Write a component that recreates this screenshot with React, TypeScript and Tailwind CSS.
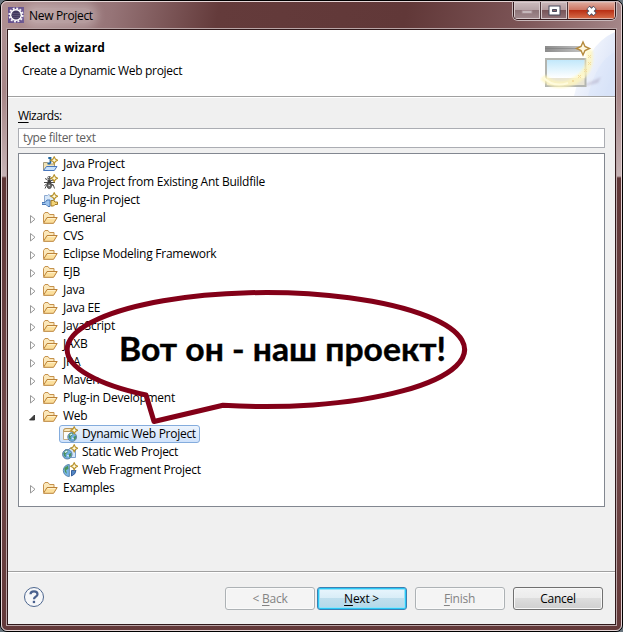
import React from "react";

const Sparkle = ({ x, y }: { x: number; y: number }) => (
  <g transform={`translate(${x} ${y})`}>
    <path d="M0-3.500 1.200-1.200 3.500 0 1.200 1.200 0 3.500-1.200 1.200-3.500 0-1.200-1.200Z" fill="#fffbe0" stroke="#b8912a" strokeWidth="1.100" />
  </g>
);

const Folder = () => (
  <svg width="16" height="16" viewBox="0 0 16 16" className="shrink-0">
    <path d="M1.500 12.500v-8L3 2.500h3l1.500 2h4.500v3" fill="#fbe8bb" stroke="#c6924c" />
    <path d="M1.500 13.300 5 7.500h10.200L11.600 13.300Z" fill="#fcdf9c" stroke="#bb8238" />
    <path d="M5.700 8.600h7.600" stroke="#fff3d2" />
  </svg>
);

const JavaIcon = () => (
  <svg width="16" height="16" viewBox="0 0 16 16" className="shrink-0">
    <path d="M1.500 14V6.500h4l1 1.500h6v2" fill="#f2e3b6" stroke="#a49a7b" />
    <path d="M1.500 14.500 4.500 10.500h10.500L12.300 14.500Z" fill="#c9e2fc" stroke="#4977bd" />
    <path d="M6.300 2h2.200v4q0 2-3 1.300" fill="none" stroke="#23679f" strokeWidth="1.800" />
    <Sparkle x={12.2} y={4.2} />
  </svg>
);

const AntIcon = () => (
  <svg width="16" height="16" viewBox="0 0 16 16" className="shrink-0">
    <path d="M3 4.500 5 5.500l2 2 4-1.500M2 8.500h11M3 14.500l1.500-3 3-1.500 4 1.500 1 3M2.500 11.500 7 8.500l5 3" fill="none" stroke="#4a4a4a" />
    <ellipse cx="7.300" cy="4" rx="2" ry="1.900" fill="#5d5d5d" />
    <ellipse cx="7.300" cy="7.500" rx="1.700" ry="1.700" fill="#3d3d3d" />
    <ellipse cx="7.300" cy="11.800" rx="2.200" ry="2.800" fill="#707070" stroke="#333" strokeWidth=".7" />
    <path d="M6 3.500h1M8 3.500h1M6.500 11.500h1.500" stroke="#ddd" />
    <Sparkle x={12.2} y={4.2} />
  </svg>
);

const PluginIcon = () => (
  <svg width="16" height="16" viewBox="0 0 16 16" className="shrink-0">
    <path d="M2.500 11V3.500h3q1-2 2.500 0h4V11" fill="#d6e7f9" stroke="#8eaad0" />
    <path d="M0 10.500h3l2-2.500h3v6.500H6L4 12.500H0Z" fill="#9cc4ee" stroke="#4c79b5" />
    <path d="M9 8.500h2.500L13 10h2.500v2.500H13L11.500 14H9Z" fill="#f3d477" stroke="#a37b25" />
    <Sparkle x={12.2} y={4.2} />
  </svg>
);

const Globe = ({ x, y, r }: { x: number; y: number; r: number }) => (
  <g transform={`translate(${x} ${y}) scale(${r / 5})`}>
    <circle r="4.800" fill="#6faee2" stroke="#5c7f9f" />
    <path d="M-4-1-2-4 1-4 0-1.500-2 0-1 3-3 2ZM1.500 0 4-1.500 4 1.500 2 3.500Z" fill="#48905b" />
    <path d="M-2.500-2 0-3.300M0 1l1.500 1" stroke="#e4f4ff" strokeWidth="1.300" />
  </g>
);

const DynamicIcon = () => (
  <svg width="16" height="16" viewBox="0 0 16 16" className="shrink-0">
    <path d="M1.500 13.500V5Q1.500 2.500 4 2.500h7v11Z" fill="#fdfdfa" stroke="#c2ad89" />
    <path d="M1.500 5.500V5Q1.500 2.500 4 2.500h7v3Z" fill="#f9e6ba" stroke="#b9975c" />
    <Globe x={10.2} y={11} r={4.6} />
    <Sparkle x={12.2} y={4.2} />
  </svg>
);

const StaticIcon = () => (
  <svg width="16" height="16" viewBox="0 0 16 16" className="shrink-0">
    <path d="M3.500 13.500v-8H7l1-1.500h5.500v9.500Z" fill="#d5e7fb" stroke="#7ba0cd" />
    <Globe x={5.3} y={10.3} r={4.9} />
    <Sparkle x={12.2} y={4.2} />
  </svg>
);

const FragmentIcon = () => (
  <svg width="16" height="16" viewBox="0 0 16 16" className="shrink-0">
    <path d="M7.300 2.500A6 6 0 0 0 7.300 14.500Z" fill="#78b6e8" stroke="#5c86ad" />
    <path d="M2.300 6 6 3.500 6.500 7 4 8 5 12 3 10Z" fill="#4a9558" />
    <path d="M9.500 8.500h4.500q-.5 4-4.500 5.500Z" fill="#5488c6" stroke="#365f9b" />
    <Sparkle x={12.2} y={4.2} />
  </svg>
);

const Arrow = ({ state }: { state?: "open" | "closed" }) => (
  <svg width="10" height="10" viewBox="0 0 10 10" className="mt-[2px] shrink-0">
    {state === "closed" && <path d="M3.500 1.500v7.500L8 5.250Z" fill="#fff" stroke="#989898" />}
    {state === "open" && <path d="M7.500 3v5h-5Z" fill="#404040" stroke="#262626" strokeWidth=".8" />}
  </svg>
);

type Row = { label: string; icon?: React.ReactNode; arrow?: "open" | "closed"; child?: boolean; selected?: boolean };

const rows: Row[] = [
  { label: "Java Project", icon: <JavaIcon /> },
  { label: "Java Project from Existing Ant Buildfile", icon: <AntIcon /> },
  { label: "Plug-in Project", icon: <PluginIcon /> },
  { label: "General", arrow: "closed" },
  { label: "CVS", arrow: "closed" },
  { label: "Eclipse Modeling Framework", arrow: "closed" },
  { label: "EJB", arrow: "closed" },
  { label: "Java", arrow: "closed" },
  { label: "Java EE", arrow: "closed" },
  { label: "JavaScript", arrow: "closed" },
  { label: "JAXB", arrow: "closed" },
  { label: "JPA", arrow: "closed" },
  { label: "Maven", arrow: "closed" },
  { label: "Plug-in Development", arrow: "closed" },
  { label: "Web", arrow: "open" },
  { label: "Dynamic Web Project", icon: <DynamicIcon />, child: true, selected: true },
  { label: "Static Web Project", icon: <StaticIcon />, child: true },
  { label: "Web Fragment Project", icon: <FragmentIcon />, child: true },
  { label: "Examples", arrow: "closed" },
];

const TreeRow = ({ row }: { row: Row }) =>
  row.child ? (
    <div className="flex h-[18px] pl-[40px]">
      <div
        className={
          row.selected
            ? "flex h-[18px] items-center gap-[4px] rounded-[3px] border border-[#84acdd] bg-linear-to-b from-[#edf4fd] to-[#cfe2fb] pr-[3px] pl-[2px]"
            : "flex h-[18px] items-center gap-[4px] border border-transparent pl-[2px]"
        }
      >
        {row.icon}
        <span className="leading-[16px] tracking-[-0.28px] whitespace-nowrap">{row.label}</span>
      </div>
    </div>
  ) : (
    <div className="flex h-[18px] items-center pl-[8px]">
      <Arrow state={row.arrow} />
      <span className="ml-[5px] flex">{row.icon ?? <Folder />}</span>
      <span className="ml-[5px] leading-[18px] whitespace-nowrap">{row.label}</span>
    </div>
  );

const EclipseIcon = () => (
  <svg width="16" height="16" viewBox="0 0 16 16" className="shrink-0">
    <rect width="16" height="16" fill="#67518d" />
    <circle cx="8" cy="8" r="6.600" fill="none" stroke="#f4f2f5" strokeWidth="2" strokeDasharray="1.900 1.556" />
    <circle cx="8" cy="8" r="5.300" fill="#40395e" stroke="#fff" strokeWidth="1.500" />
    <path d="M4 6.500h8M3.500 8.500h9M4 10.500h8" stroke="#5f5879" strokeWidth=".8" />
  </svg>
);

const TitleBar = () => (
  <div className="flex h-[28px] justify-between">
    <div className="mt-[5px] flex h-[16px] items-center">
      <span className="ml-[6px] flex"><EclipseIcon /></span>
      <span className="ml-[5px] rounded-full bg-white/25 leading-[15px] tracking-[-0.32px] shadow-[0_0_8px_5px_rgba(255,255,255,0.25)]">New Project</span>
    </div>
    <div className="mr-[5px] flex h-[18px] overflow-hidden rounded-b-[5px] border border-t-0 border-[#33191d] shadow-[0_0_0_1px_#c9b9bb]">
      <div className="flex w-[27px] items-center justify-center border-r border-[#4b3539] bg-[linear-gradient(#cbbcbe,#b5a3a6_48%,#8d7478_50%,#a18a8e)] pt-[3px] shadow-[inset_0_0_0_1px_#d6c9cb]">
        <svg width="12" height="6" viewBox="0 0 12 6"><path d="M1 1.500h10v3H1Z" fill="#c4b7ba" stroke="#a2898f" /></svg>
      </div>
      <div className="flex w-[27px] items-center justify-center border-r border-[#4b3539] bg-[linear-gradient(#cbb8ba,#b39a9d_48%,#785559_50%,#92757a)] shadow-[inset_0_0_0_1px_#d6c9cb]">
        <svg width="13" height="12" viewBox="0 0 13 12"><path d="M3 3h7v5H3Z" fill="none" stroke="#484a5d" strokeWidth="5" /><path d="M3 3h7v5H3Z" fill="none" stroke="#fff" strokeWidth="3" /><path d="M4.500 4.500h4v2h-4Z" fill="#8a6368" stroke="#484a5d" /></svg>
      </div>
      <div className="flex w-[47px] items-center justify-center bg-[linear-gradient(#deac9f,#cd735f_48%,#ba3015_50%,#d8704d)] shadow-[inset_0_0_0_1px_#e1b5aa]">
        <svg width="13" height="12" viewBox="0 0 13 12"><path d="m3 2.500 7 7m0-7-7 7" stroke="#4c4c5e" strokeWidth="4.800" /><path d="m3.400 2.900 6.200 6.200m0-6.200-6.200 6.200" stroke="#fff" strokeWidth="2.900" /></svg>
      </div>
    </div>
  </div>
);

const WizardBanner = () => (
  <svg width="75" height="66" viewBox="0 0 75 66" className="shrink-0">
    <defs>
      <linearGradient id="sky" x2="1" y2="0.600"><stop stopColor="#fff" /><stop offset="1" stopColor="#dbe4f8" /></linearGradient>
      <linearGradient id="pane" x2="0" y2="1"><stop stopColor="#c2e8fb" /><stop offset="1" stopColor="#fff" /></linearGradient>
      <linearGradient id="bar" x2="1"><stop stopColor="#8c8c8c" /><stop offset="1" stopColor="#c6c6c6" /></linearGradient>
      <filter id="soft"><feGaussianBlur stdDeviation="1.300" /></filter>
    </defs>
    <path d="M75 2Q46 14 34 66H75Z" fill="url(#sky)" />
    <path d="M75 22Q57 30 48 66H75Z" fill="#d5e1f8" opacity=".35" />
    <path d="M40 57 61 47 58 53Z" fill="#a49bb5" opacity=".4" filter="url(#soft)" />
    <rect x="5" y="16" width="41" height="41" fill="#fff" />
    <rect x="5" y="16" width="40" height="6" fill="url(#bar)" />
    <path d="M5 18.500h38" stroke="#777" opacity=".5" />
    <path d="M6 29h39.500v27H6Z" fill="#e9e5d5" stroke="#b3b5b0" strokeWidth="2" />
    <rect x="7" y="30" width="37.500" height="18" fill="url(#pane)" />
    <path d="M3 47Q13 58 30 53Q53 44 49 20" fill="none" stroke="#fff6bb" strokeWidth="7" opacity=".75" filter="url(#soft)" />
    <path d="M3 47Q13 58 28 53" fill="none" stroke="#fffbdc" strokeWidth="2" />
    <g fill="none" stroke="#f2dc9f"><path d="m48 25 3 3m0-3-3 3M48 32l3 3m0-3-3 3M44 39l3 3m0-3-3 3M38 45l3 3m0-3-3 3M32 50l2 2m0-2-2 2" /></g>
    <path d="m43 12 2 4.500 4.500 2-4.500 2-2 4.500-2-4.500-4.500-2 4.500-2Z" fill="#fff8e0" stroke="#b58a3c" strokeWidth="1.400" />
  </svg>
);

const btn = "flex h-[23px] w-[90px] items-center justify-center rounded-[3px] border";

export default function App() {
  return (
    <div className="h-[632px] w-[623px] overflow-hidden bg-[#68747d] font-['Open_Sans','Noto_Sans',sans-serif] text-[12px] tracking-[-0.25px] text-black">
      <div className="h-[632px] rounded-[7px] border border-black bg-[linear-gradient(100deg,#b09092_0%,#967477_18%,#643b3b_35%,#613838_65%,#7b5355_83%,#a58789_100%)] bg-[length:100%_30px] bg-no-repeat">
        <div className="flex h-[630px] flex-col rounded-[6px] border border-[#e5d5d6] bg-[linear-gradient(180deg,transparent_28px,#ac8f91_28px,#a78687_90px,#c6b3b5_174px,#5e3636_176px,#704849_420px,#633939_100%)]">
          <TitleBar />
          <div className="mx-[4px] -mt-[2px] flex h-[598px] flex-col border border-[#b9a5a6]">
            <div className="flex h-[596px] flex-col border border-[#30191b] bg-[#f0f0f0]">
              <div className="flex h-[67px] justify-between border-b border-[#a0a0a0] bg-white">
                <div className="pt-[9px] pl-[6px]">
                  <h1 className="text-[12px] leading-[17px] font-bold tracking-[0.1px]">Select a wizard</h1>
                  <p className="mt-[7px] pl-[8px] leading-[16px] tracking-[-0.32px]">Create a Dynamic Web project</p>
                </div>
                <WizardBanner />
              </div>
              <div className="h-[474px] border-t border-white px-[10px] pt-[10px]">
                <div className="h-[20px] leading-[16px] tracking-[-0.5px]"><span className="underline underline-offset-2">W</span>izards:</div>
                <div className="h-[20px] border border-[#abadb3] bg-white pl-[4px] leading-[18px] tracking-[-0.35px] text-[#606060]">type filter text</div>
                <div className="relative mt-[5px] h-[354px] border border-[#828790] bg-white pt-px">
                  {rows.map((row) => <TreeRow key={row.label} row={row} />)}
                  <svg width="410" height="142" viewBox="62 286 410 142" className="absolute top-[132px] left-[43px]">
                    <path d="M146 395A198.700 57 0 1 1 223 405.200L154 421.500Z" fill="none" stroke="#830018" strokeWidth="5" strokeLinejoin="round" />
                    <text x="119" y="361" fontSize="32" fontWeight="700" textLength="327" lengthAdjust="spacingAndGlyphs" letterSpacing="0" stroke="#000" strokeWidth="0.4" className="font-['Lato','Open_Sans',sans-serif] tracking-normal">Вот он - наш проект!</text>
                  </svg>
                </div>
              </div>
              <div className="flex h-[53px] items-start border-t border-[#a0a0a0] shadow-[inset_0_1px_0_#fff]">
                <svg width="22" height="22" viewBox="0 0 22 22" className="mt-[14px] ml-[15px]">
                  <circle cx="11" cy="11" r="9.500" fill="#f6f7f9" stroke="#4e678f" />
                  <path d="M7.500 8.300Q7.500 5.300 11 5.300T14.500 8.200Q14.500 9.800 12.700 10.700 11 11.600 11 13.200" fill="none" stroke="#4a618e" strokeWidth="2.200" />
                  <rect x="9.800" y="14.800" width="2.300" height="2.300" fill="#4a618e" />
                </svg>
                <div className="mt-[15px] ml-[180px] flex">
                  <div className={`${btn} border-[#adb2b5] bg-[#f4f4f4] text-[#838383] shadow-[inset_0_0_0_1px_#fafafa]`}>&lt;&nbsp;<u className="underline-offset-2">B</u>ack</div>
                  <div className={`${btn} ml-[2px] border-[#3c7fb1] bg-[linear-gradient(#e9f6fd_0,#d9edf7_48%,#c0dfed_49%,#b3d8e9_100%)] pr-px shadow-[inset_0_0_0_1px_#2ac8f6,inset_0_0_0_2px_#97e1f7]`}><u className="underline-offset-2">N</u>ext&nbsp;&gt;</div>
                  <div className={`${btn} ml-[8px] border-[#adb2b5] bg-[#f4f4f4] pr-px text-[#838383] shadow-[inset_0_0_0_1px_#fafafa]`}><u className="underline-offset-2">F</u>inish</div>
                  <div className={`${btn} ml-[8px] border-[#707070] bg-[linear-gradient(#f2f2f2_0,#ebebeb_49%,#dddddd_50%,#cfcfcf_100%)] shadow-[inset_0_0_0_1px_#f8f8f8]`}>Cancel</div>
                </div>
              </div>
            </div>
          </div>
        </div>
      </div>
    </div>
  );
}
